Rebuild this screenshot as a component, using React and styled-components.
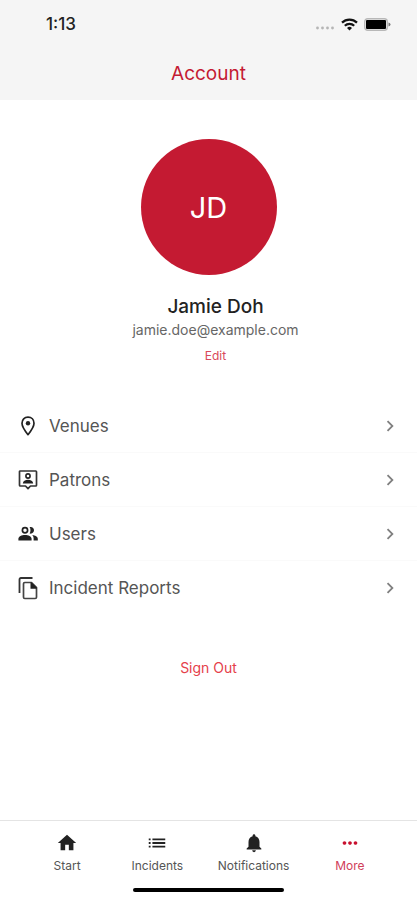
import React, { useState } from 'react'
import styled, { createGlobalStyle } from 'styled-components'
import {
  MdChevronRight,
  MdHome,
  MdList,
  MdNotifications,
  MdMoreHoriz,
} from 'react-icons/md'

const PinIcon = () => (
  <svg width="20" height="20" viewBox="0 0 20 20" aria-hidden="true">
    <path
      d="M10 1.2c-3.6 0-6 2.6-6 6.1 0 4 6 11.4 6 11.4s6-7.4 6-11.4c0-3.5-2.4-6.1-6-6.1z"
      fill="none"
      stroke="#222"
      strokeWidth="1.7"
      strokeLinejoin="round"
    />
    <circle cx="10" cy="7.3" r="2.2" fill="#222" />
  </svg>
)

const PatronIcon = () => (
  <svg width="20" height="20" viewBox="0 0 20 20" aria-hidden="true">
    <path
      d="M2.3 1h15.4q.8 0 .8.8v13.4q0 .8-.8.8H12.5L10 18.6 7.5 16H2.3q-.8 0-.8-.8V1.8q0-.8.8-.8z"
      fill="none"
      stroke="#333"
      strokeWidth="1.7"
      strokeLinejoin="round"
    />
    <circle cx="10" cy="6" r="2.1" fill="none" stroke="#222" strokeWidth="1.6" />
    <path d="M4.8 13.5c.3-2.500 2.400-3.700 5.200-3.700s4.900 1.200 5.200 3.700z" fill="#222" />
  </svg>
)

const UsersIcon = () => (
  <svg width="20" height="20" viewBox="0 0 20 20" aria-hidden="true">
    <circle cx="7" cy="6.3" r="2.6" fill="none" stroke="#222" strokeWidth="1.7" />
    <path d="M11.6 3.1c2.6-.6 4.4 1 4.4 3.2s-1.8 3.8-4.4 3.2c1.2-1.8 1.2-4.6 0-6.4z" fill="#222" />
    <path d="M.4 16.5v-1.700c0-2.600 3.300-3.900 6.600-3.900s6.600 1.300 6.600 3.900v1.700z" fill="#222" />
    <path d="M14.2 11c3 .4 5.600 1.600 5.600 3.800v1.700h-4.200v-1.900c0-1.500-.5-2.700-1.400-3.600z" fill="#222" />
  </svg>
)

const ReportsIcon = () => (
  <svg width="22" height="24" viewBox="0 0 22 24" aria-hidden="true">
    <path d="M2.500 17V3.500q0-1.500 1.500-1.500h11.500" fill="none" stroke="#333" strokeWidth="1.8" />
    <path
      d="M7.800 6.500h6.700l5 5v9.700q0 1.300-1.300 1.300H7.800q-1.300 0-1.300-1.300V7.800q0-1.300 1.300-1.300z"
      fill="none"
      stroke="#444"
      strokeWidth="1.700"
      strokeLinejoin="round"
    />
    <path d="M13.500 6.500h1.200l5 5v1.300h-6.200z" fill="#222" />
  </svg>
)

const menuItems = [
  { label: 'Venues', icon: PinIcon },
  { label: 'Patrons', icon: PatronIcon },
  { label: 'Users', icon: UsersIcon },
  { label: 'Incident Reports', icon: ReportsIcon },
]

const tabs = [
  { label: 'Start', icon: MdHome },
  { label: 'Incidents', icon: MdList },
  { label: 'Notifications', icon: MdNotifications },
  { label: 'More', icon: MdMoreHoriz },
]

const StatusIcons = () => (
  <StatusGroup>
    <svg width="20" height="6" viewBox="0 0 20 6" fill="#b5b5b5" aria-hidden="true">
      <circle cx="2.500" cy="3" r="1.400" />
      <circle cx="7.500" cy="3" r="1.400" />
      <circle cx="12.500" cy="3" r="1.400" />
      <circle cx="17.500" cy="3" r="1.400" />
    </svg>
    <svg width="17" height="13" viewBox="0 0 17 13" aria-hidden="true">
      <g fill="none" stroke="#111" strokeWidth="2.2">
        <path d="M1 4.6a10.8 10.8 0 0 1 15 0" />
        <path d="M3.8 7.7a6.8 6.8 0 0 1 9.4 0" />
      </g>
      <path d="M8.5 12.6l-2.500-2.700a3.600 3.600 0 0 1 5 0z" fill="#111" />
    </svg>
    <svg width="27" height="13" viewBox="0 0 27 13" aria-hidden="true">
      <rect x="0.7" y="0.7" width="22.6" height="11.6" rx="3" fill="#f5f5f5" stroke="#b8b8b8" strokeWidth="1.4" />
      <rect x="2" y="2" width="20" height="9" rx="1" fill="#000" />
      <path d="M24.500 4.500q2 .6 2 2t-2 2z" fill="#777" />
    </svg>
  </StatusGroup>
)

const App = () => {
  const [current, setCurrent] = useState('More')

  return (
    <>
      <GlobalStyle />
      <Screen>
        <Header>
          <StatusBar>
            <Time>1:13</Time>
            <StatusIcons />
          </StatusBar>
          <Title>Account</Title>
        </Header>
        <Main>
          <Avatar>JD</Avatar>
          <Profile>
            <Name>Jamie Doh</Name>
            <Email>jamie.doe@example.com</Email>
            <EditButton type="button">Edit</EditButton>
          </Profile>
          <Menu>
            {menuItems.map(({ label, icon: Icon }) => (
              <MenuItem key={label}>
                <MenuLink href={`#${label}`}>
                  <MenuIcon>
                    <Icon />
                  </MenuIcon>
                  <MenuLabel>{label}</MenuLabel>
                  <MdChevronRight size={22} color="#808080" />
                </MenuLink>
              </MenuItem>
            ))}
          </Menu>
          <SignOut type="button">Sign Out</SignOut>
        </Main>
        <Footer>
          <TabBar>
            {tabs.map(({ label, icon: Icon }) => (
              <Tab
                key={label}
                type="button"
                $active={label === current}
                onClick={() => setCurrent(label)}
              >
                <Icon size={22} />
                <span>{label}</span>
              </Tab>
            ))}
          </TabBar>
          <HomeIndicator />
        </Footer>
      </Screen>
    </>
  )
}

const GlobalStyle = createGlobalStyle`
  * {
    box-sizing: border-box;
  }
  body {
    margin: 0;
    background-color: #fff;
    color: #222;
    font-family: Inter, "Liberation Sans", sans-serif;
  }
  button {
    border: 0;
    padding: 0;
    background: none;
    font-family: inherit;
    cursor: pointer;
  }
`

const Screen = styled.div`
  display: flex;
  flex-direction: column;
  min-height: 100vh;
`

const Header = styled.header`
  background-color: #f5f5f5;
  padding-bottom: 14px;
`

const StatusBar = styled.div`
  display: flex;
  align-items: center;
  justify-content: space-between;
  height: 48px;
  padding: 0 26px 0 46px;
`

const Time = styled.span`
  font-size: 17px;
  font-weight: 500;
`

const StatusGroup = styled.div`
  display: flex;
  align-items: center;
  gap: 6px;
  svg:first-child {
    align-self: flex-end;
  }
`

const Title = styled.h1`
  margin: 0;
  padding-top: 14px;
  color: #c41a32;
  font-size: 19px;
  font-weight: 400;
  line-height: 24px;
  text-align: center;
`

const Main = styled.main`
  flex: 1;
  display: flex;
  flex-direction: column;
  align-items: center;
  padding-top: 39px;
`

const Avatar = styled.div`
  display: flex;
  align-items: center;
  justify-content: center;
  width: 136px;
  height: 136px;
  border-radius: 50%;
  background-color: #c41a32;
  color: #fff;
  font-size: 29px;
`

const Profile = styled.section`
  display: flex;
  flex-direction: column;
  align-items: center;
  padding: 20px 0 0 14px;
`

const Name = styled.h2`
  margin: 0;
  font-size: 19px;
  font-weight: 500;
  line-height: 24px;
`

const Email = styled.p`
  margin: 0;
  color: #666;
  font-size: 14px;
  line-height: 22px;
`

const EditButton = styled.button`
  margin-top: 5px;
  color: #d9485a;
  font-size: 12px;
  line-height: 20px;
`

const Menu = styled.ul`
  align-self: stretch;
  margin: 33px 0 0;
  padding: 0;
  list-style: none;
`

const MenuItem = styled.li`
  border-bottom: 1px solid #fafafa;
  &:last-child {
    border-bottom-color: transparent;
  }
`

const MenuLink = styled.a`
  display: flex;
  align-items: center;
  height: 53px;
  padding: 0 16px;
  color: #222;
  text-decoration: none;
`

const MenuIcon = styled.span`
  display: flex;
  justify-content: center;
  width: 24px;
  margin-right: 9px;
`

const MenuLabel = styled.span`
  flex: 1;
  color: #555;
  font-size: 17px;
`

const SignOut = styled.button`
  margin-top: 43px;
  color: #e5404a;
  font-size: 14px;
  line-height: 20px;
`

const Footer = styled.footer`
  border-top: 1px solid #e4e4e4;
  padding-bottom: 8px;
`

const TabBar = styled.nav`
  display: grid;
  grid-template-columns: 7fr 8fr 8fr 8fr;
  padding: 11px 19px 0 25px;
`

const Tab = styled.button`
  display: flex;
  flex-direction: column;
  align-items: center;
  gap: 4px;
  color: ${({ $active }) => ($active ? '#c8102e' : '#222')};
  span {
    color: ${({ $active }) => ($active ? '#d0405a' : '#555')};
    font-size: 12px;
    line-height: 16px;
  }
`

const HomeIndicator = styled.div`
  width: 36%;
  height: 4px;
  margin: 14px auto 0;
  border-radius: 2px;
  background-color: #000;
`

export default App
